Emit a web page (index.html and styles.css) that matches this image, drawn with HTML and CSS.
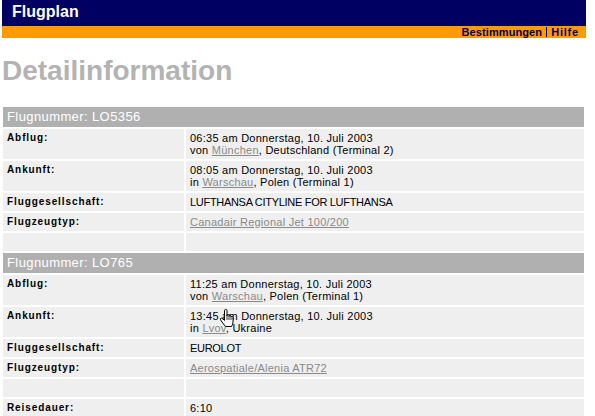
FILE: index.html
```html
<!DOCTYPE html>
<html lang="de">
<head>
<meta charset="utf-8">
<title>Flugplan – Detailinformation</title>
<link rel="stylesheet" href="styles.css">
</head>
<body>
<div class="topbar"><span class="brand">Flugplan</span></div>
<div class="subbar">
  <a class="navlink" href="#">Bestimmungen</a><span class="sep"></span><a class="navlink navlink-wide" href="#">Hilfe</a>
</div>
<h1 class="title">Detailinformation</h1>
<div class="content">
<table class="flights">
  <tr><th class="flighthead" colspan="2">Flugnummer: LO5356</th></tr>
  <tr><td class="label">Abflug:</td><td class="value">06:35 am Donnerstag, 10. Juli 2003<br>von <a class="lnk" href="#">München</a>, Deutschland (Terminal 2)</td></tr>
  <tr><td class="label">Ankunft:</td><td class="value">08:05 am Donnerstag, 10. Juli 2003<br>in <a class="lnk" href="#">Warschau</a>, Polen (Terminal 1)</td></tr>
  <tr><td class="label">Fluggesellschaft:</td><td class="value caps">LUFTHANSA CITYLINE FOR LUFTHANSA</td></tr>
  <tr><td class="label">Flugzeugtyp:</td><td class="value"><a class="lnk" href="#">Canadair Regional Jet 100/200</a></td></tr>
  <tr><td class="label">&nbsp;</td><td class="value">&nbsp;</td></tr>
  <tr><th class="flighthead" colspan="2">Flugnummer: LO765</th></tr>
  <tr><td class="label">Abflug:</td><td class="value">11:25 am Donnerstag, 10. Juli 2003<br>von <a class="lnk" href="#">Warschau</a>, Polen (Terminal 1)</td></tr>
  <tr><td class="label">Ankunft:</td><td class="value">13:45 am Donnerstag, 10. Juli 2003<br>in <a class="lnk" href="#">Lvov</a>, Ukraine</td></tr>
  <tr><td class="label">Fluggesellschaft:</td><td class="value caps">EUROLOT</td></tr>
  <tr><td class="label">Flugzeugtyp:</td><td class="value"><a class="lnk" href="#">Aerospatiale/Alenia ATR72</a></td></tr>
  <tr><td class="label">&nbsp;</td><td class="value">&nbsp;</td></tr>
  <tr><td class="label">Reisedauer:</td><td class="value">6:10</td></tr>
</table>
<svg class="cursor" width="15" height="18" viewBox="0 0 15 18" aria-hidden="true">
  <path d="M5.5 1.5 Q5.5 0.5 6.75 0.5 Q8 0.5 8 1.5 L8 7 L8 6.5 Q8 5.5 9 5.5 Q10 5.5 10 6.5 L10 7.5 Q10 6.5 11 6.5 Q12 6.5 12 7.5 L12 8 Q12 7.5 13 7.5 Q14 7.5 14 8.5 L14 13 Q14 15 12.5 17.5 L6.5 17.5 L3 13 Q1 10.5 1.5 9.5 Q2.5 8.5 4 10 L5.5 11.5 Z" fill="#fff" stroke="#000" stroke-width="1" stroke-linejoin="round"/>
  <path d="M8 7 L8 11 M10 7.5 L10 11 M12 8 L12 11" stroke="#000" stroke-width="0.8" fill="none"/>
</svg>
</div>
</body>
</html>
```
FILE: styles.css
```css
html, body {
  margin: 0;
  padding: 0;
  background: #ffffff;
}
body {
  font-family: "Liberation Sans", Arial, sans-serif;
  color: #000;
}
.topbar {
  margin: 0 9px 0 2px;
  height: 26px;
  background: #000062;
}
.brand {
  display: block;
  padding-left: 10px;
  font-size: 16px;
  font-weight: bold;
  line-height: 23px;
  color: #ffffff;
}
.subbar {
  margin: 0 9px 0 2px;
  height: 12px;
  background: #ff9a00;
  display: flex;
  justify-content: flex-end;
  align-items: center;
  padding-right: 7px;
}
.navlink {
  font-size: 11px;
  font-weight: bold;
  line-height: 12px;
  color: #000062;
  text-decoration: none;
  letter-spacing: 0.1px;
}
.navlink-wide {
  letter-spacing: 0.8px;
}
.sep {
  display: block;
  width: 1px;
  height: 10px;
  background: #000062;
  margin: 0 4px 0 4px;
}
.title {
  margin: 17px 0 18px 2px;
  font-size: 28px;
  line-height: 32px;
  font-weight: bold;
  color: #b3b3b3;
}
.content {
  position: relative;
}
.flights {
  margin-left: 1px;
  width: 585px;
  border-collapse: separate;
  border-spacing: 2px;
}
.flighthead {
  background: #b0b0b0;
  color: #ffffff;
  text-align: left;
  font-weight: normal;
  font-size: 13px;
  letter-spacing: 0.4px;
  line-height: 14px;
  padding: 3px 4px;
}
.label, .value {
  background: #efefef;
  vertical-align: top;
  padding: 3px 4px;
  line-height: 12px;
}
.label {
  width: 173px;
  font-size: 10px;
  font-weight: bold;
  letter-spacing: 0.9px;
}
.value {
  font-size: 11px;
  letter-spacing: 0.25px;
}
.caps {
  letter-spacing: -0.3px;
}
.lnk {
  color: #8a8a8a;
  text-decoration: underline;
}
.cursor {
  position: absolute;
  left: 219px;
  top: 204px;
}
```
